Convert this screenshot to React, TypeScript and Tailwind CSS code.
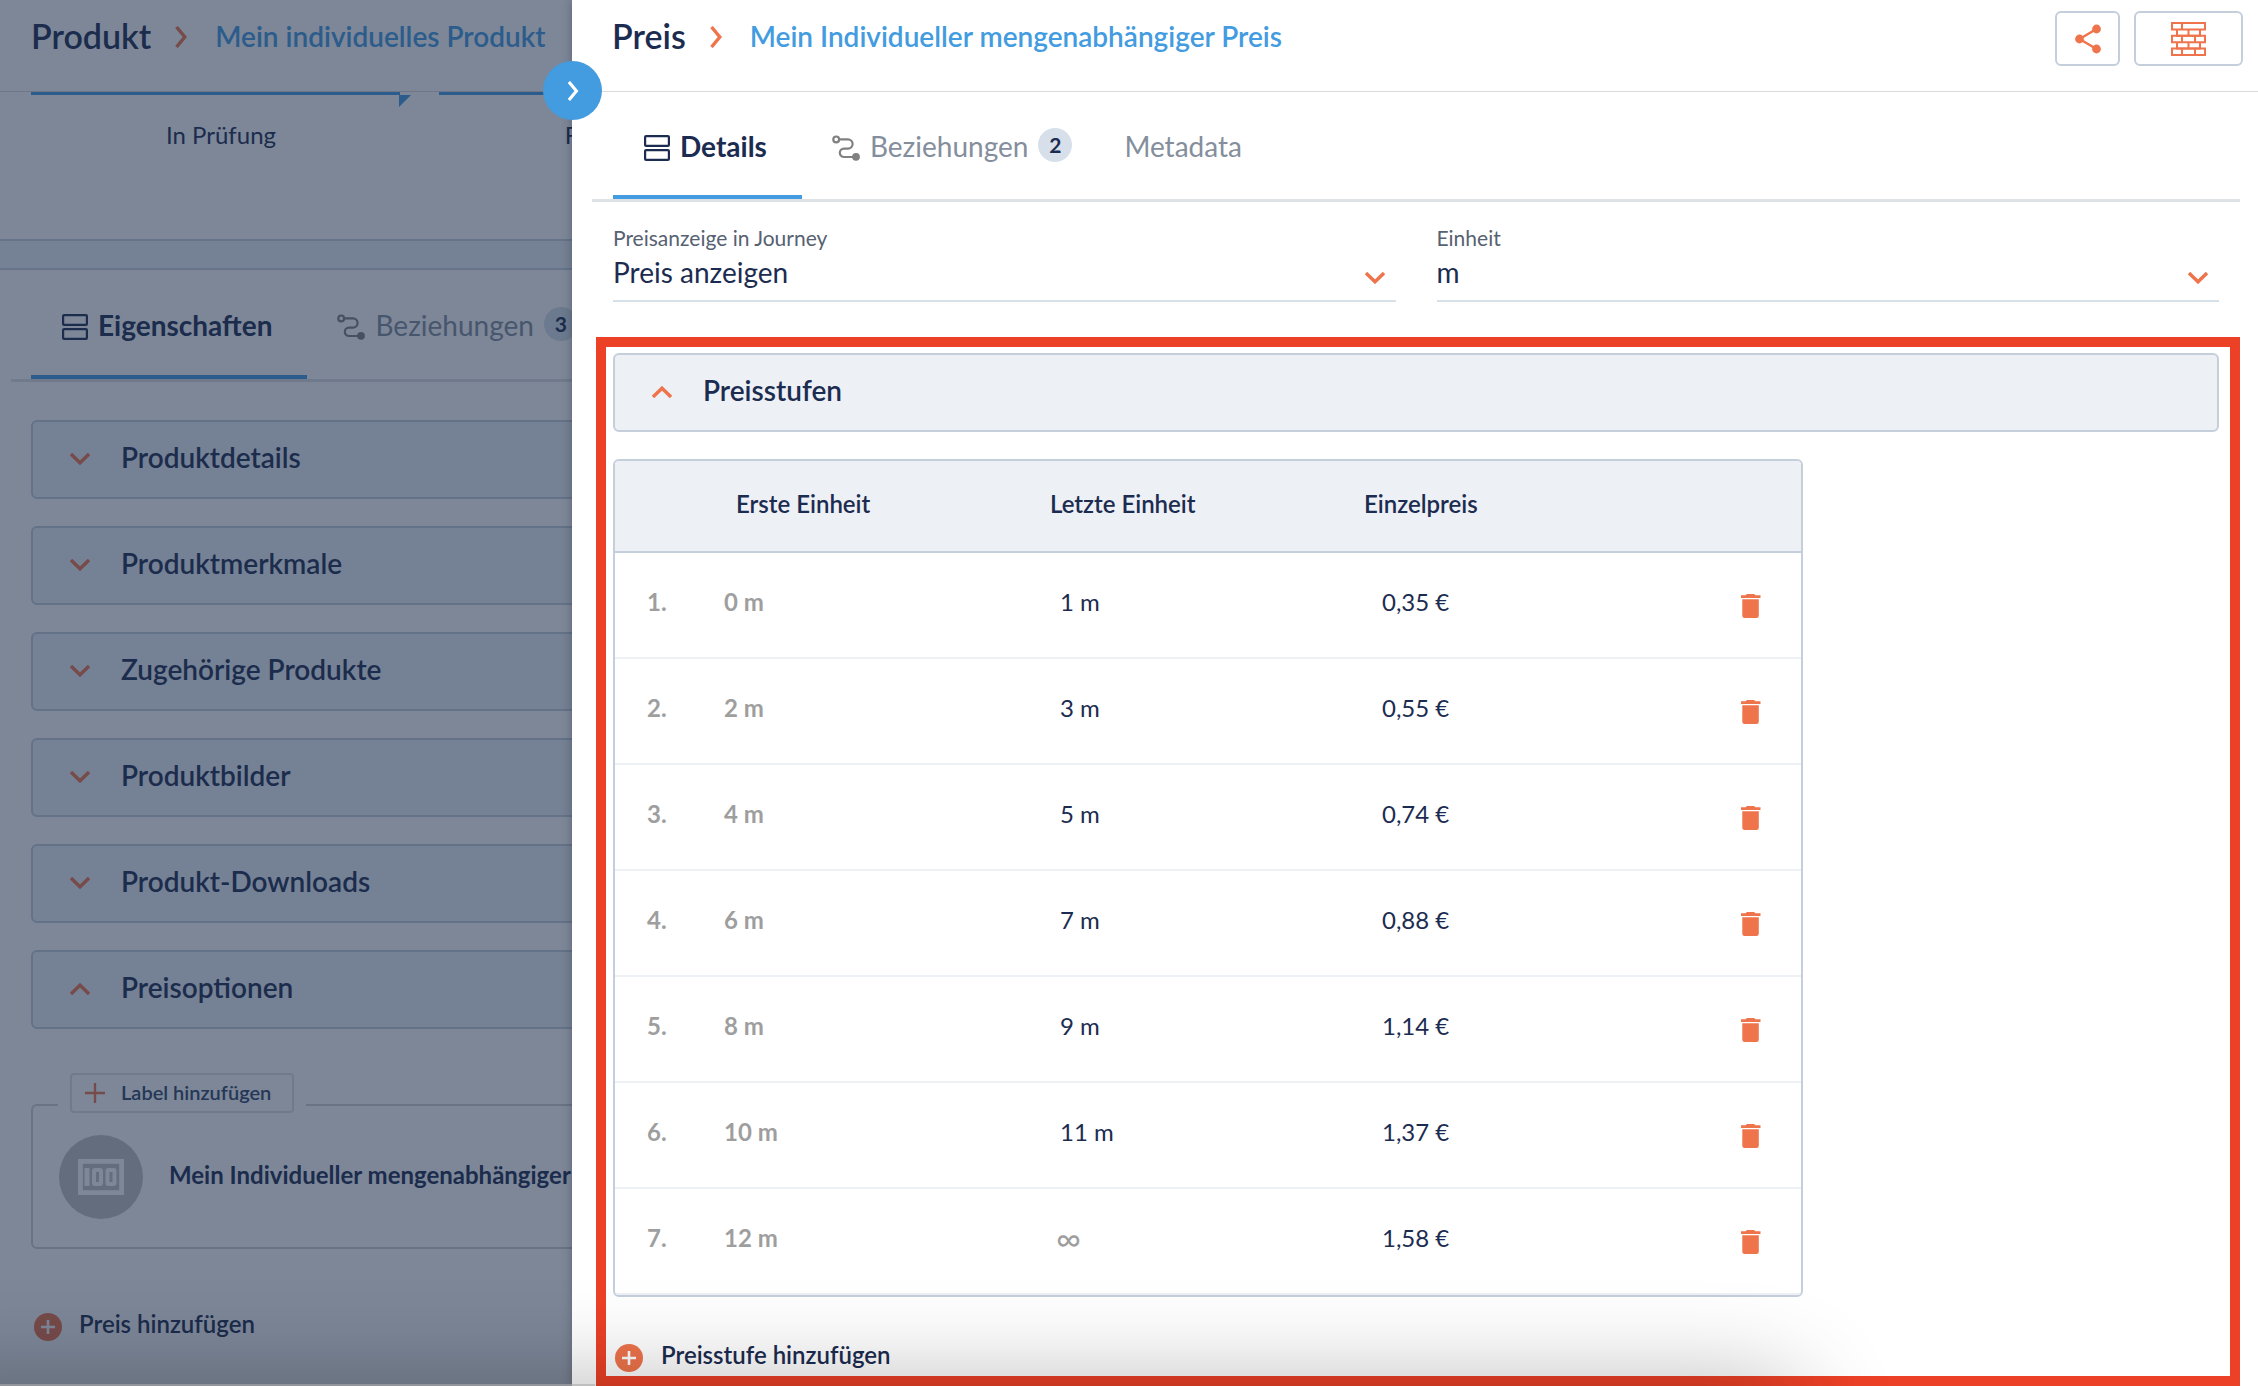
import { useState } from "react";
import type { ReactNode } from "react";

type Tier = { first: string; last: string | null; price: string };

const INITIAL_TIERS: Tier[] = [
  { first: "0 m", last: "1 m", price: "0,35 €" },
  { first: "2 m", last: "3 m", price: "0,55 €" },
  { first: "4 m", last: "5 m", price: "0,74 €" },
  { first: "6 m", last: "7 m", price: "0,88 €" },
  { first: "8 m", last: "9 m", price: "1,14 €" },
  { first: "10 m", last: "11 m", price: "1,37 €" },
  { first: "12 m", last: null, price: "1,58 €" },
];

const PRODUCT_SECTIONS = [
  { title: "Produktdetails", open: false },
  { title: "Produktmerkmale", open: false },
  { title: "Zugehörige Produkte", open: false },
  { title: "Produktbilder", open: false },
  { title: "Produkt-Downloads", open: false },
  { title: "Preisoptionen", open: true },
];

function ChevronRight({ className }: { className?: string }) {
  return (
    <svg viewBox="0 0 12 22" className={className} fill="none" stroke="currentColor" strokeWidth="3.4" aria-hidden="true">
      <path d="M1.5 1 9.8 11 1.5 21" />
    </svg>
  );
}

function ChevronDown({ className }: { className?: string }) {
  return (
    <svg viewBox="0 0 20 12" className={className} fill="none" stroke="currentColor" strokeWidth="3.4" aria-hidden="true">
      <path d="M1 1 10 9.8 19 1" />
    </svg>
  );
}

function RowsIcon() {
  return (
    <svg viewBox="0 0 26 26" className="size-[26px] shrink-0" fill="none" stroke="currentColor" strokeWidth="2.2" aria-hidden="true">
      <rect x="1.1" y="1.1" width="23.8" height="9.8" rx="1" />
      <rect x="1.1" y="15.1" width="23.8" height="9.8" rx="1" />
    </svg>
  );
}

function RouteIcon() {
  return (
    <svg viewBox="0 0 28 26" className="h-[26px] w-7 shrink-0 text-[#808080]" fill="none" stroke="currentColor" strokeWidth="2.2" aria-hidden="true">
      <circle cx="4.2" cy="4.4" r="2.9" />
      <path d="M7.5 4.4H16a4.6 4.6 0 0 1 0 9.2h-4a4.2 4.2 0 0 0 0 8.4h10" />
      <circle cx="24" cy="21.8" r="3.9" fill="currentColor" stroke="none" />
    </svg>
  );
}

function PlusCircle() {
  return (
    <svg viewBox="0 0 28 28" className="size-7 shrink-0" aria-hidden="true">
      <circle cx="14" cy="14" r="14" fill="#ef744c" />
      <path d="M14 7v14M7 14h14" stroke="#fff" strokeWidth="2.6" />
    </svg>
  );
}

function BanknoteIcon() {
  return (
    <svg viewBox="0 0 46 36" className="h-9 w-[46px]" aria-hidden="true">
      <rect x="2.4" y="2.4" width="41.2" height="31.2" fill="none" stroke="#fff" strokeWidth="4.8" />
      <rect x="6.5" y="9" width="5" height="18" fill="#fff" />
      <rect x="16" y="11" width="7" height="14" rx="1" fill="none" stroke="#fff" strokeWidth="4" />
      <rect x="29.5" y="11" width="7" height="14" rx="1" fill="none" stroke="#fff" strokeWidth="4" />
    </svg>
  );
}

function ShareIcon() {
  return (
    <svg viewBox="0 0 26 30" className="h-[30px] w-[26px]" fill="currentColor" aria-hidden="true">
      <path d="M4.5 15 21.5 5M4.5 15 21.5 25" stroke="currentColor" strokeWidth="2.4" />
      <circle cx="4.5" cy="15" r="4.4" />
      <circle cx="21.5" cy="5" r="4.4" />
      <circle cx="21.5" cy="25" r="4.4" />
    </svg>
  );
}

function BricksIcon() {
  return (
    <svg viewBox="0 0 35 34" className="h-[34px] w-[35px]" fill="none" stroke="currentColor" strokeWidth="2" aria-hidden="true">
      <path d="M1 1h33v6.4H1zM11 1v6.4" />
      <path d="M6 7.4v6.4h23V7.4M17.5 7.4v6.4" />
      <path d="M1 13.8h33v6.4H1zM11 13.8v6.4M24 13.8v6.4" />
      <path d="M6 20.2v6.4h23v-6.4M17.5 20.2v6.4" />
      <path d="M1 26.6h33V33H1zM11 26.6V33M24 26.6V33" />
    </svg>
  );
}

function TrashIcon() {
  return (
    <svg viewBox="0 0 20 24" className="h-6 w-5" fill="currentColor" aria-hidden="true">
      <path d="M6 0h7l1.5 1.3H19.5V4H0V1.3h4.5zM1.3 5.3h16.5v16a2.5 2.5 0 0 1-2.5 2.7H3.8a2.5 2.5 0 0 1-2.5-2.7z" />
    </svg>
  );
}

function PageHeader({ title, link, children }: { title: string; link: string; children?: ReactNode }) {
  return (
    <header className="flex h-[92px] items-start justify-between border-b border-[#d9dbdd] pr-[15px]">
      <div className="flex h-[74px] items-center whitespace-nowrap">
        <h1 className="pb-1 text-[34px] font-semibold">{title}</h1>
        <ChevronRight className="mx-6 h-[22px] w-3 shrink-0 text-[#ef744c]" />
        <a href="#" className="pb-0.5 pl-1 text-[28px] font-semibold text-[#439be0]">{link}</a>
      </div>
      {children}
    </header>
  );
}

function Tab({ active, icon, label, count }: { active?: boolean; icon?: ReactNode; label: string; count?: number }) {
  return (
    <button
      type="button"
      role="tab"
      aria-selected={!!active}
      className={
        active
          ? "flex items-center gap-2.5 border-b-4 border-[#439be0] pt-2 pr-[35px] pl-[31px] text-[28px] font-bold"
          : "flex items-center gap-2.5 border-b-4 border-transparent pt-2 pr-[22px] pl-[30px] text-[28px] text-[#848e9c]"
      }
    >
      {icon}
      <span className="pb-1">{label}</span>
      {count != null && (
        <span className="mb-1.5 flex size-[34px] items-center justify-center rounded-full bg-[#d7e0ea] text-[21px] font-bold text-[#1c2c50]">
          {count}
        </span>
      )}
    </button>
  );
}

function AccordionBar({ title, open }: { title: string; open?: boolean }) {
  return (
    <button
      type="button"
      aria-expanded={!!open}
      className="flex h-[79px] w-full items-center gap-[31px] rounded-md border-2 border-[#c5cedb] bg-[#edf0f5] pb-0.5 pl-[37px] text-left text-[28px] font-semibold"
    >
      <ChevronDown className={open ? "h-3 w-5 rotate-180 text-[#ef744c]" : "h-3 w-5 text-[#ef744c]"} />
      <span className="pb-1">{title}</span>
    </button>
  );
}

function SelectField({ id, label, value }: { id: string; label: string; value: string }) {
  return (
    <div>
      <label htmlFor={id} className="block text-[21px] leading-6 text-[#566171]">{label}</label>
      <div className="relative">
        <select id={id} defaultValue={value} className="h-[52px] w-full appearance-none border-b-2 border-[#d7e1ea] pb-1.5 text-[28px] outline-none">
          <option>{value}</option>
        </select>
        <ChevronDown className="pointer-events-none absolute top-[22px] right-[11px] h-3 w-5 text-[#ef744c]" />
      </div>
    </div>
  );
}

function ProductPage() {
  return (
    <div className="relative w-[572px] shrink-0 overflow-hidden bg-white">
      <div className="w-[900px]">
        <div className="[&>header]:pl-[31px]">
          <PageHeader title="Produkt" link="Mein individuelles Produkt" />
        </div>

        <ol className="flex h-[147px] gap-7 pl-[31px] text-center text-[24px]">
          <li className="w-[380px] shrink-0">
            <div className="mr-[11px] h-[3px] bg-[#439be0]" />
            <svg viewBox="0 0 12 12" className="ml-auto size-3" aria-hidden="true">
              <path d="M0 0h12L0 12z" fill="#439be0" />
            </svg>
            <p className="mt-2.5">In Prüfung</p>
          </li>
          <li className="w-[380px] shrink-0">
            <div className="mr-[11px] h-[3px] bg-[#439be0]" />
            <p className="mt-[22px]">Freigegeben</p>
          </li>
        </ol>

        <div className="h-[31px] border-y-2 border-[#c8d3dd] bg-[#edf0f5]" />

        <div role="tablist" className="ml-[11px] flex h-[112px] border-b-[3px] border-[#dfe2e5] pl-5">
          <Tab active icon={<RowsIcon />} label="Eigenschaften" />
          <Tab icon={<RouteIcon />} label="Beziehungen" count={3} />
        </div>

        <div className="flex flex-col gap-[27px] pt-[38px] pl-[31px]">
          {PRODUCT_SECTIONS.map((s) => (
            <AccordionBar key={s.title} title={s.title} open={s.open} />
          ))}
        </div>

        <div className="relative mt-[75px] ml-[31px] flex h-[145px] items-center gap-[26px] rounded-md border-2 border-[#d0d0d0] pl-[26px]">
          <div className="absolute -top-[33px] left-[25px] bg-white px-3">
            <button type="button" className="flex h-10 items-center gap-4 rounded-sm border-2 border-[#e0e0e0] pr-[21px] pl-[13px] text-[20px] font-semibold text-[#34486a]">
              <svg viewBox="0 0 20 20" className="size-5" stroke="#ef744c" strokeWidth="2.4" aria-hidden="true">
                <path d="M10 0v20M0 10h20" />
              </svg>
              <span className="pb-0.5">Label hinzufügen</span>
            </button>
          </div>
          <span className="flex size-[84px] shrink-0 items-center justify-center rounded-full bg-[#c4c4c4]">
            <BanknoteIcon />
          </span>
          <span className="pb-1 text-[24px] font-bold whitespace-nowrap">Mein Individueller mengenabhängiger Preis</span>
        </div>

        <button type="button" className="mt-16 ml-[34px] flex h-7 items-center gap-[17px] text-[24px] font-semibold">
          <PlusCircle />
          <span className="pb-1.5">Preis hinzufügen</span>
        </button>
      </div>
      <div className="absolute inset-0 bg-[#1b2c49]/57" />
    </div>
  );
}

function TierTable({ tiers, onRemove }: { tiers: Tier[]; onRemove: (i: number) => void }) {
  return (
    <div className="mt-[27px] max-w-[1190px] overflow-hidden rounded-md border-2 border-[#c5cedb]">
      <table className="w-full table-fixed border-separate border-spacing-0 text-left text-[24px]">
        <colgroup>
          <col className="w-[97px]" />
          <col className="w-[314px]" />
          <col className="w-[314px]" />
          <col />
          <col className="w-[100px]" />
        </colgroup>
        <thead>
          <tr className="h-[92px] bg-[#edf0f5] [&>*]:border-b-2 [&>*]:border-[#c5cedb] [&>*]:pb-1 [&>*]:font-semibold">
            <td />
            <th scope="col" className="px-6">Erste Einheit</th>
            <th scope="col" className="px-6">Letzte Einheit</th>
            <th scope="col" className="px-6">Einzelpreis</th>
            <td />
          </tr>
        </thead>
        <tbody>
          {tiers.map((t, i) => (
            <tr key={t.first} className="h-[106px] [&>td]:border-b-2 [&>td]:border-[#edf0f4] [&>td]:pb-1.5">
              <td className="pl-8 font-bold text-[#9e9e9e]">{i + 1}.</td>
              <td className="pl-3 font-bold text-[#9e9e9e]">{t.first}</td>
              {t.last ? <td className="pl-[34px]">{t.last}</td> : <td className="pl-[30px] text-[34px] leading-none text-[#9e9e9e]">∞</td>}
              <td className="pl-[42px]">{t.price}</td>
              <td>
                <button type="button" aria-label={`Preisstufe ${i + 1} löschen`} onClick={() => onRemove(i)} className="mx-auto block pt-[7px] text-[#ef744c]">
                  <TrashIcon />
                </button>
              </td>
            </tr>
          ))}
        </tbody>
      </table>
    </div>
  );
}

export default function App() {
  const [tiers, setTiers] = useState(INITIAL_TIERS);

  function removeTier(i: number) {
    setTiers((list) => list.filter((_, idx) => idx !== i));
  }

  return (
    <div className="relative flex min-h-screen overflow-hidden bg-white font-['Lato',sans-serif] text-[#1c2c50]">
      <ProductPage />

      <main className="relative flex min-w-0 flex-1 flex-col bg-white shadow-[0_0_10px_rgba(0,0,0,0.25)]">
        <button
          type="button"
          aria-label="Schließen"
          className="absolute top-[61px] -left-[29px] z-10 flex size-[59px] items-center justify-center rounded-full bg-[#439be0] text-white"
        >
          <ChevronRight className="h-5 w-3" />
        </button>

        <div className="[&>header]:pl-10">
          <PageHeader title="Preis" link="Mein Individueller mengenabhängiger Preis">
            <div className="flex gap-3.5 pt-[11px] text-[#ef744c]">
              <button type="button" aria-label="Teilen" className="flex h-[55px] w-[65px] items-center justify-center rounded-md border-2 border-[#c5cedb]">
                <ShareIcon />
              </button>
              <button type="button" aria-label="Bausteine" className="flex h-[55px] w-[109px] items-center justify-center rounded-md border-2 border-[#c5cedb]">
                <BricksIcon />
              </button>
            </div>
          </PageHeader>
        </div>

        <div role="tablist" className="mr-[18px] ml-5 flex h-[110px] border-b-[3px] border-[#dfe2e5] pl-[21px]">
          <Tab active icon={<RowsIcon />} label="Details" />
          <Tab icon={<RouteIcon />} label="Beziehungen" count={2} />
          <Tab label="Metadata" />
        </div>

        <div className="grid grid-cols-2 gap-[41px] pt-6 pr-[39px] pl-[41px]">
          <SelectField id="display" label="Preisanzeige in Journey" value="Preis anzeigen" />
          <SelectField id="unit" label="Einheit" value="m" />
        </div>

        <section className="mt-[35px] mr-[18px] ml-6 flex-1 border-[10px] border-[#ec4127] pt-1.5 pr-[11px] pb-1 pl-[7px]">
          <AccordionBar title="Preisstufen" open />
          <TierTable tiers={tiers} onRemove={removeTier} />
          <button type="button" className="mt-[47px] ml-0.5 flex h-7 items-center gap-[18px] text-[24px] font-semibold">
            <PlusCircle />
            <span className="pb-1.5">Preisstufe hinzufügen</span>
          </button>
        </section>
      </main>

      {/* top edge of the docked window with its shadow */}
      <div className="pointer-events-none absolute bottom-0 left-0 h-0.5 w-[595px] bg-[#c9c9c9]/60" />
      <div className="pointer-events-none absolute top-full -left-24 h-24 w-[1890px] shadow-[0_0_100px_rgba(0,0,0,0.3)]" />
    </div>
  );
}
